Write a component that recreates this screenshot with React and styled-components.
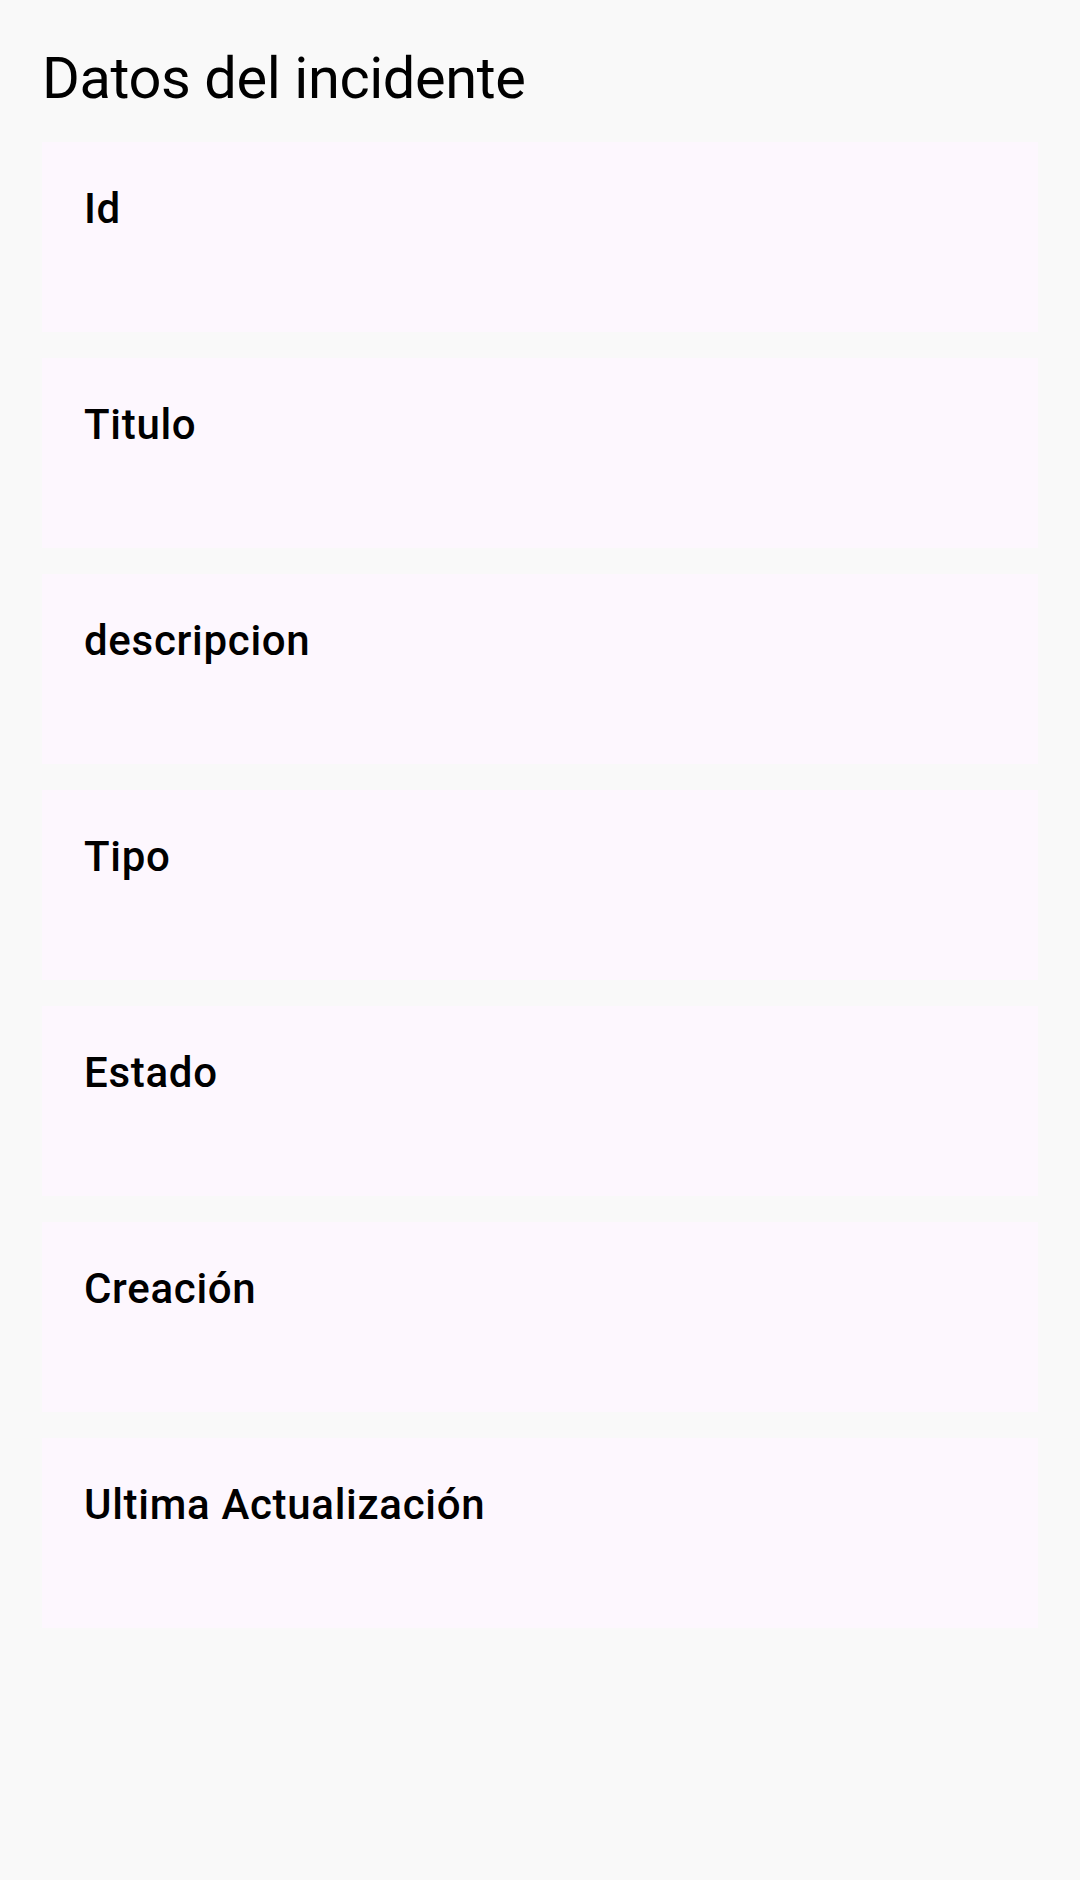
import React from 'react';
import styled, { createGlobalStyle } from 'styled-components';

const GlobalStyle = createGlobalStyle`
  html, body {
    margin: 0;
    padding: 0;
    min-height: 100%;
    background: #f9f9f9;
  }

  body {
    font-family: Roboto, 'Noto Sans', sans-serif;
    color: #000;
  }
`;

const Screen = styled.div`
  min-height: 1880px;
  box-sizing: border-box;
  padding: 42px;
  display: flex;
  flex-direction: column;
  gap: 26.25px;
  background: #f9f9f9;
`;

const Title = styled.h1`
  margin: 0;
  font-size: 57.75px;
  line-height: 73.5px;
  font-weight: 400;
  letter-spacing: -0.4px;
  color: #000;
`;

const Card = styled.section`
  box-sizing: border-box;
  min-height: 189.75px;
  padding: 42px;
  background: #fdf7fe;
  display: flex;
  flex-direction: column;
`;

const Label = styled.span`
  font-size: 42px;
  line-height: normal;
  font-weight: 500;
  letter-spacing: 0.7px;
  color: #000;
`;

const Value = styled.span`
  font-size: 42px;
  line-height: normal;
  color: #49454f;
`;

const fields = [
  { label: 'Id', value: '' },
  { label: 'Titulo', value: '' },
  { label: 'descripcion', value: '' },
  { label: 'Tipo', value: '' },
  { label: 'Estado', value: '' },
  { label: 'Creación', value: '' },
  { label: 'Ultima Actualización', value: '' },
];

const App = () => {
  return (
    <>
      <GlobalStyle />
      <Screen>
        <Title>Datos del incidente</Title>
        {fields.map((field) => (
          <Card key={field.label}>
            <Label>{field.label}</Label>
            {field.value && <Value>{field.value}</Value>}
          </Card>
        ))}
      </Screen>
    </>
  );
};

export default App;
